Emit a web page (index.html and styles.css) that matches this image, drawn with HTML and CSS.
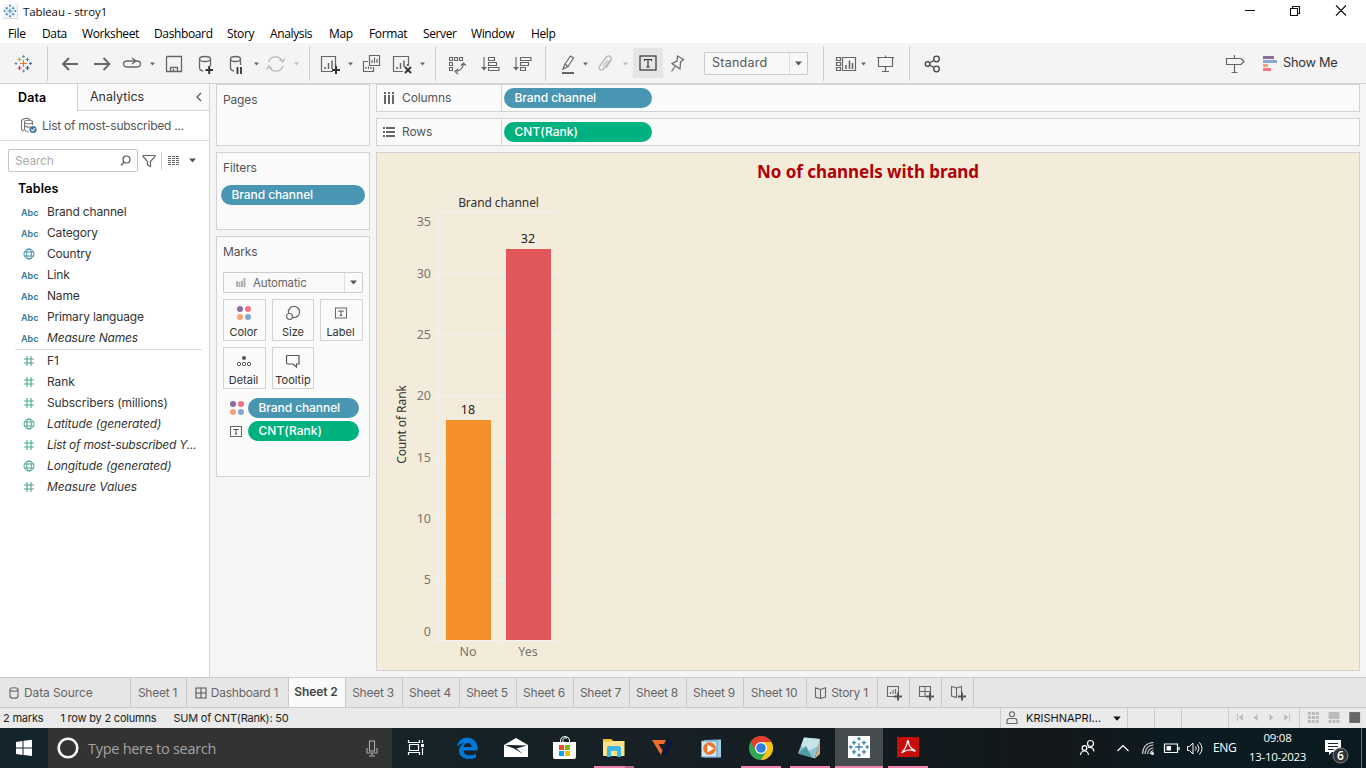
FILE: index.html
```html
<!DOCTYPE html>
<html lang="en">
<head>
<meta charset="utf-8">
<title>Tableau - stroy1</title>
<link rel="stylesheet" href="styles.css">
</head>
<body>
<svg class="defs" width="0" height="0">
  <defs>
    <symbol id="caret" viewBox="0 0 6 4"><path d="M0 0.3H6L3 3.8Z" fill="currentColor"/></symbol>
    <symbol id="dots" viewBox="0 0 16 16"><circle cx="4" cy="4" r="3" fill="#8a6d9a"/><circle cx="12" cy="4" r="3" fill="#fa7085"/><circle cx="4" cy="12" r="3" fill="#f2a576"/><circle cx="12" cy="12" r="3" fill="#85a7cf"/></symbol>
    <symbol id="tbox" viewBox="0 0 14 13"><rect x="1.500" y="1.500" width="11" height="10" fill="none" stroke="#666" stroke-width="1"/><path d="M4.500 5V4.500H9.500V5M7 4.500V9M5.800 9H8.200" fill="none" stroke="#555" stroke-width="1"/></symbol>
    <symbol id="hash" viewBox="0 0 12 12"><path d="M4 1V11M8 1V11M1 4H11M1 8H11" fill="none" stroke="currentColor" stroke-width="1.1"/></symbol>
    <symbol id="globe" viewBox="0 0 12 12"><circle cx="6" cy="6" r="5" fill="none" stroke="currentColor"/><ellipse cx="6" cy="6" rx="2.3" ry="5" fill="none" stroke="currentColor"/><path d="M1.5 4H10.5M1.5 8H10.5" stroke="currentColor"/></symbol>
    <symbol id="mark" viewBox="-10 -10 20 20"><path d="M-3.5 0H3.5M0-3.5V3.5M-6.5-4H-2.5M-4.5-6V-2M2.500-4H6.500M4.500-6V-2M-6.500 4.500H-2.500M-4.500 2.500V6.500M2.500 4.500H6.500M4.500 2.500V6.500M-1.500-7.500H1.500M0-9V-6M-1.500 7.500H1.500M0 6V9M-9 0H-6M-7.500-1.500V1.500M6 0H9M7.500-1.500V1.500" fill="none" stroke="currentColor" stroke-width="1.200"/></symbol>
  </defs>
</svg>
<div class="app">
  <header class="titlebar">
    <span class="appicon"><svg width="14" height="14"><use href="#mark"/></svg></span>
    <span class="apptitle">Tableau - stroy1</span>
    <svg class="winctl" width="130" height="22" viewBox="1236 0 130 22"><path d="M1245 10.500H1255M1290.500 8.500H1297.500V15.500H1290.500ZM1292.500 8V6.500H1299.500V13.500H1298M1336 5.500L1346 15.500M1346 5.500L1336 15.500" fill="none" stroke="#111" stroke-width="1.100"/></svg>
  </header>
  <nav class="menubar"><span>File</span><span>Data</span><span>Worksheet</span><span>Dashboard</span><span>Story</span><span>Analysis</span><span>Map</span><span>Format</span><span>Server</span><span>Window</span><span>Help</span></nav>

  <div class="toolbar">
    <svg width="47" height="41" viewBox="0 43 47 41"><g fill="none" stroke-width="1.200"><path d="M20 63.500H27M23.500 60V67" stroke="#e8762c"/><path d="M17.500 59.500H21.500M19.500 57.500V61.500" stroke="#e09a3e"/><path d="M25.500 59.500H29.500M27.500 57.500V61.500" stroke="#4f9a9c"/><path d="M17.500 68H21.500M19.500 66V70" stroke="#c13c4c"/><path d="M25.500 68H29.500M27.500 66V70" stroke="#2d5a82"/><path d="M22 56.500H25M23.500 55V58M22 71H25M23.500 69.500V72.500M14.500 63.500H17.500M16 62V65" stroke="#7397ac"/><path d="M29 63.500H32M30.500 62V65" stroke="#596aa0"/></g></svg>
    <i class="sep"></i>
    <svg width="261" height="41" viewBox="48 43 261 41" fill="none" stroke="#666" stroke-width="1.300">
      <path d="M78 64H63M69 58L63 64L69 70M94 64H109.500M103.500 58L109.500 64L103.500 70" stroke-width="1.900"/>
      <path d="M135 61H127.500Q123.500 61 123.500 64T127.500 67H136.500Q140.500 67 140.500 64T137 61H130M132 58L136 61L132 64"/>
      <path d="M166.500 56.500H181.500V71.500H166.500V56.500M170.500 71.500V67.500H177.500V71.500M173.500 71V69"/>
      <path d="M199.500 59V68.500Q200 70.500 203 71M210.500 59V66"/><ellipse cx="205" cy="59" rx="5.500" ry="2.500"/><path d="M205.500 70H213M209.200 66V74" stroke="#333" stroke-width="2"/>
      <path d="M230.500 59V68.500Q231 70.500 234 71M240.500 59V65"/><ellipse cx="235.500" cy="59" rx="5" ry="2.500"/><path d="M237.500 67V74M241 67V74" stroke="#333" stroke-width="1.800"/>
      <g stroke="#b8b8b8"><path d="M268.500 62A7.500 7.500 0 0 1 282 60.500M283 66A7.500 7.500 0 0 1 269.500 67.500M279.500 59.500L283 62L284.500 58.500M272 68.500L268.500 66L267 69.500"/></g>
      <g stroke="none"><path d="M150 62.500H155L152.500 65.500ZM254 62.500H259L256.500 65.500Z" fill="#666"/><path d="M294 62.500H299L296.500 65.500Z" fill="#bbb"/></g>
    </svg>
    <i class="sep"></i>
    <svg width="125" height="41" viewBox="310 43 125 41" fill="none" stroke="#666" stroke-width="1.200">
      <path d="M335.500 66V56.500H321.500V71.500H333"/><path d="M325 67V69M328.500 63V69M332 60.500V69M335.500 64V66" stroke-width="1.500"/><path d="M332 70H340M336 66V74" stroke="#333" stroke-width="2"/>
      <path d="M369.500 55.500H379.500V65.500H369.500ZM368 61.500H363.500V71.500H373.500V67"/><path d="M372 60V63M374.500 57.500V63M377 59V63M366 67V69M368.500 66.500V69M371 67V69"/>
      <path d="M408.500 66V56.500H393.500V71.500H403"/><path d="M397 67V69M400.500 63V69M404 60.500V67M407.500 64V66" stroke-width="1.500"/><path d="M405 67L411 73M411 67L405 73" stroke="#333" stroke-width="1.900"/>
      <path d="M348 62.500H353L350.500 65.500ZM420 62.500H425L422.500 65.500Z" fill="#666" stroke="none"/>
    </svg>
    <i class="sep"></i>
    <svg width="109" height="41" viewBox="436 43 109 41" fill="none" stroke="#666" stroke-width="1.100">
      <path d="M449.500 57.500H452.500V60.500H449.500ZM454.500 57.500H457.500V60.500H454.500ZM459.500 57.500H462.500V60.500H459.500ZM449.500 62.500H452.500V65.500H449.500ZM449.500 67.500H452.500V70.500H449.500ZM455 71.500Q463 71 463.500 63M461 65.500L463.500 63L466 65.500M458 69L455 71.500L458 74"/>
      <path d="M484 57V69M488.500 57.500H494.500V60.500H488.500ZM488.500 62.500H496.500V65.500H488.500ZM488.500 67.500H499V70.500H488.500Z"/><path d="M481 67H487L484 70.500Z" fill="#666" stroke="none"/>
      <path d="M516 57V69M520.500 57.500H531V60.500H520.500ZM520.500 62.500H528.500V65.500H520.500ZM520.500 67.500H525.500V70.500H520.500Z"/><path d="M513 67H519L516 70.500Z" fill="#666" stroke="none"/>
    </svg>
    <i class="sep"></i>
    <svg width="87" height="41" viewBox="546 43 87 41" fill="none" stroke="#666" stroke-width="1.100">
      <path d="M563 69L565 64L570.500 56L573.500 58L568 66.500ZM565 64L568 66.500"/><path d="M562 73H574" stroke-width="2"/>
      <path d="M610 60L604.500 68Q602 71 600 69.500T600.500 65L606 57.500Q608.500 54.500 610.500 57T610 62L606 68M607.500 60L603 66.500" stroke="#b8b8b8" stroke-width="1.300"/>
      <path d="M583 62.500H588L585.500 65.500Z" fill="#666" stroke="none"/><path d="M623 62.500H628L625.500 65.500Z" fill="#bbb" stroke="none"/>
    </svg>
    <span class="tbtn"><svg width="18" height="16" viewBox="0 0 18 16" fill="none" stroke="#333" stroke-width="1.200"><rect x="1" y="1" width="16" height="14"/><path d="M5.500 6V4.500H12.500V6M9 4.500V12M7.200 12H10.800"/></svg></span>
    <svg width="41" height="41" viewBox="663 43 41 41" fill="none" stroke="#666" stroke-width="1.200"><path d="M677.500 56L683.500 59.500L680.500 62L680 69L672 63.500L677 61ZM675.500 66L671.500 71.500"/></svg>
    <div class="fit"><span>Standard</span><b><svg width="7" height="5"><use href="#caret"/></svg></b></div>
    <svg width="15" height="41"></svg>
    <i class="sep"></i>
    <svg width="85" height="41" viewBox="824 43 85 41" fill="none" stroke="#666" stroke-width="1.200">
      <path d="M842.500 57.500H855.500V70.500H842.500ZM836.500 57.500H840.500V60.500H836.500ZM836.500 62.500H840.500V65.500H836.500ZM836.500 67.500H840.500V70.500H836.500Z"/><path d="M846 65V69M849.500 60.500V69M852.500 63V69" stroke-width="1.600"/>
      <path d="M861 62.500H866L863.500 65.500Z" fill="#666" stroke="none"/>
      <path d="M877 57.500H894M878.500 57.500V66.500H892.500V57.500M885.500 55.500V57M885.500 67V71.500M882 71.500H889"/>
    </svg>
    <i class="sep"></i>
    <svg width="40" height="41" viewBox="910 43 40 41" fill="none" stroke="#444" stroke-width="1.300"><circle cx="927.500" cy="64" r="2.300"/><circle cx="936.500" cy="59" r="2.800"/><circle cx="936.500" cy="69" r="2.800"/><path d="M929.500 63L934 60.500M929.500 65L934 67.500"/></svg>
    <svg class="push" width="66" height="41" viewBox="1216 43 66 41"><path d="M1226.500 58.500H1241L1244 61.500L1241 64.500H1226.500ZM1234.500 55V58M1234.500 65V72.500M1231.500 72.500H1237.500" fill="none" stroke="#666" stroke-width="1.200"/><path fill="#8a6d9a" d="M1263 56H1274V59H1263Z"/><path fill="#85a7cf" d="M1263 60H1277V63H1263Z"/><path fill="#f2a576" d="M1263 64H1268V67H1263Z"/><path fill="#fa7085" d="M1263 68H1271V71H1263Z"/></svg>
    <span class="showme">Show Me</span>
  </div>

  <main class="work">
    <aside class="data">
      <div class="dtabs"><b>Data</b><span>Analytics<svg width="6" height="10" viewBox="0 0 6 10"><path d="M5 1L1 5L5 9" fill="none" stroke="#555" stroke-width="1.200"/></svg></span></div>
      <div class="source"><svg width="18" height="18" viewBox="0 0 18 18" fill="none" stroke="#777" stroke-width="1.100"><path d="M10 3Q9 1 5.500 1.500T1.500 4V12Q2 14 4 14M4.500 5V12Q5 15 9 15M12.500 5V8"/><ellipse cx="8.500" cy="5" rx="4" ry="1.800"/><path d="M5 9Q8 11 10 9.500"/><circle cx="13" cy="12.500" r="3.600" fill="#3c7f9f" stroke="none"/><path d="M11.300 12.500L12.600 13.800L15 11.300" stroke="#fff"/></svg><span>List of most-subscribed ...</span></div>
      <div class="find"><div class="search"><span>Search</span><svg width="11" height="11" viewBox="0 0 11 11" fill="none" stroke="#555" stroke-width="1.200"><circle cx="6.500" cy="4.500" r="3.500"/><path d="M4 7L1 10.500"/></svg></div><svg width="14" height="14" viewBox="0 0 14 14" fill="none" stroke="#666" stroke-width="1.200"><path d="M1 1.500H13V2.500L8.500 7.500V12.500L5.500 11V7.500L1 2.500Z"/></svg><i></i><svg width="12" height="12" viewBox="0 0 12 12" stroke="#666" stroke-width="1.100" stroke-dasharray="3 1"><path d="M0 1.500H12M0 3.500H12M0 5.500H12M0 7.500H12M0 9.500H12"/></svg><svg class="drop" width="7" height="5"><use href="#caret"/></svg></div>
      <h2>Tables</h2>
      <ul class="fields dim">
        <li><b>Abc</b>Brand channel</li><li><b>Abc</b>Category</li><li><svg width="12" height="12"><use href="#globe"/></svg>Country</li><li><b>Abc</b>Link</li><li><b>Abc</b>Name</li><li><b>Abc</b>Primary language</li><li><b>Abc</b><em>Measure Names</em></li>
      </ul>
      <ul class="fields mea">
        <li><svg width="12" height="12"><use href="#hash"/></svg>F1</li><li><svg width="12" height="12"><use href="#hash"/></svg>Rank</li><li><svg width="12" height="12"><use href="#hash"/></svg>Subscribers (millions)</li><li><svg width="12" height="12"><use href="#globe"/></svg><em>Latitude (generated)</em></li><li><svg width="12" height="12"><use href="#hash"/></svg><em class="long">List of most-subscribed Y...</em></li><li><svg width="12" height="12"><use href="#globe"/></svg><em>Longitude (generated)</em></li><li><svg width="12" height="12"><use href="#hash"/></svg><em>Measure Values</em></li>
      </ul>
    </aside>

    <section class="cards">
      <div class="card pages"><h3>Pages</h3></div>
      <div class="card filters"><h3>Filters</h3><div class="pill blue">Brand channel</div></div>
      <div class="card marks"><h3>Marks</h3>
        <div class="marktype"><svg width="10" height="10" viewBox="0 0 10 10" stroke="#aaa" stroke-width="1.800"><path d="M1 3V9M3.500 4V9M6 3V9M8.500 0V9"/></svg><span>Automatic</span><b><svg width="7" height="5"><use href="#caret"/></svg></b></div>
        <div class="mgrid">
          <div><svg width="16" height="16"><use href="#dots"/></svg>Color</div>
          <div><svg width="16" height="16" viewBox="0 0 16 16" fill="#fafafa" stroke="#666" stroke-width="1.200"><circle cx="9" cy="7" r="5.600"/><circle cx="4.500" cy="11.500" r="3"/></svg>Size</div>
          <div><svg width="14" height="16"><use href="#tbox"/></svg>Label</div>
          <div><svg width="16" height="16" viewBox="0 0 16 16" fill="none" stroke="#555"><circle cx="8" cy="5" r="2" fill="#555" stroke="none"/><circle cx="3" cy="11" r="1.700"/><circle cx="8" cy="11" r="1.700"/><circle cx="13" cy="11" r="1.700"/></svg>Detail</div>
          <div><svg width="16" height="16" viewBox="0 0 16 16" fill="none" stroke="#555" stroke-width="1.200"><path d="M2 2.500H14V11H11.500V14L8 11H3Q1.500 11 1.500 9.500V3.500Z"/></svg>Tooltip</div>
        </div>
        <div class="enc"><svg width="16" height="16"><use href="#dots"/></svg><div class="pill blue">Brand channel</div></div>
        <div class="enc"><svg width="16" height="13"><use href="#tbox"/></svg><div class="pill green">CNT(Rank)</div></div>
      </div>
    </section>

    <section class="canvas">
      <div class="shelf"><label><svg width="12" height="12" viewBox="0 0 12 12" fill="#666"><path d="M1 0H3V2H1ZM5 0H7V2H5ZM9 0H11V2H9ZM1 3H3V12H1ZM5 3H7V12H5ZM9 3H11V12H9Z"/></svg>Columns</label><div class="pill blue">Brand channel</div></div>
      <div class="shelf"><label><svg width="12" height="12" viewBox="0 0 12 12" fill="#666"><path d="M0 1H2V3H0ZM0 5H2V7H0ZM0 9H2V11H0ZM3 1H12V3H3ZM3 5H12V7H3ZM3 9H12V11H3Z"/></svg>Rows</label><div class="pill green">CNT(Rank)</div></div>
      <div class="view">
        <h1>No of channels with brand</h1>
        <svg class="chart" width="200" height="480" viewBox="380 185 200 480">
          <path d="M433 212.500H559M433 273.500H559M433 334.500H559M433 395.500H559M433 457.500H559M433 518.500H559M433 579.500H559M433 640.500H559M438.500 212V644M498.500 641V644M558.500 641V644" stroke="#f2f2f3" fill="none"/>
          <rect x="446" y="420" width="45" height="220" fill="#f58f2b"/><rect x="506" y="249" width="45" height="391" fill="#e15759"/>
          <g class="tick" text-anchor="end"><text x="431" y="226">35</text><text x="431" y="278">30</text><text x="431" y="339">25</text><text x="431" y="400">20</text><text x="431" y="462">15</text><text x="431" y="523">10</text><text x="431" y="584">5</text><text x="431" y="636">0</text></g>
          <g class="tick" text-anchor="middle"><text x="468" y="656">No</text><text x="528" y="656">Yes</text></g>
          <g class="val" text-anchor="middle"><text x="468" y="414">18</text><text x="528" y="243">32</text></g>
          <g class="axis" text-anchor="middle"><text x="498.500" y="207">Brand channel</text><text transform="translate(406 424.500) rotate(-90)">Count of Rank</text></g>
        </svg>
      </div>
    </section>
  </main>

  <div class="sheets">
    <span class="source-tab"><svg width="10" height="12" viewBox="0 0 10 12" fill="none" stroke="#666" stroke-width="1.100"><ellipse cx="5" cy="2.500" rx="4" ry="1.700"/><path d="M1 2.500V9.500Q1.500 11.300 5 11.300T9 9.500V2.500"/></svg>Data Source</span><span class="narrow">Sheet 1</span><span class="dash"><svg width="12" height="12" viewBox="0 0 12 12" fill="none" stroke="#555" stroke-width="1.100"><path d="M1 1H11V11H1ZM6 1V11M1 6H11"/></svg>Dashboard 1</span><span class="on">Sheet 2</span><span>Sheet 3</span><span>Sheet 4</span><span>Sheet 5</span><span>Sheet 6</span><span class="narrow">Sheet 7</span><span>Sheet 8</span><span>Sheet 9</span><span class="ten">Sheet 10</span><span class="story"><svg width="13" height="12" viewBox="0 0 13 12" fill="none" stroke="#666" stroke-width="1.100"><path d="M6.500 2.500L1.500 0.800V10L6.500 11.500L11.500 10V0.800ZM6.500 2.500V11"/></svg>Story 1</span>
    <span class="new"><svg width="16" height="16" viewBox="0 0 16 16" fill="none" stroke="#666" stroke-width="1.100"><path d="M12.500 8V1.500H1.500V11.500H9M4.500 7V9M7 5V9M9.500 4V9"/><path d="M8 11.500H16M12 7.500V15.500" stroke="#555" stroke-width="2"/></svg></span>
    <span class="new"><svg width="16" height="16" viewBox="0 0 16 16" fill="none" stroke="#666" stroke-width="1.100"><path d="M12.500 8V1.500H1.500V11.500H9M7 1.500V11.500M1.500 6.500H12.500"/><path d="M8 11.500H16M12 7.500V15.500" stroke="#555" stroke-width="2"/></svg></span>
    <span class="new"><svg width="16" height="16" viewBox="0 0 16 16" fill="none" stroke="#666" stroke-width="1.100"><path d="M11.500 8V1.500L6.500 3L1.500 1.500V11L6.500 12.500V3"/><path d="M8 11.500H16M12 7.500V15.500" stroke="#555" stroke-width="2"/></svg></span>
  </div>
  <div class="status"><span>2 marks</span><span>1 row by 2 columns</span><span>SUM of CNT(Rank): 50</span>
    <div class="user"><svg width="12" height="14" viewBox="0 0 12 14" fill="none" stroke="#666" stroke-width="1.100"><circle cx="6" cy="3.300" r="2.500"/><path d="M1 12.500V10Q1 7.500 3.500 7.500H8.500Q11 7.500 11 10V12.500Z"/></svg><span>KRISHNAPRI...</span><svg width="8" height="5"><use href="#caret"/></svg></div>
    <i></i><i></i><i class="wide"></i>
    <svg class="pager" width="71" height="20" viewBox="1228 708 71 20" fill="#bbb"><path d="M1236 714H1237V721H1236ZM1242 714V721L1238 717.500ZM1257 714V721L1253 717.500ZM1269 714V721L1273 717.500ZM1284 714V721L1288 717.500ZM1289 714H1290V721H1289Z"/></svg>
    <svg class="layouts" width="67" height="20" viewBox="1299 708 67 20" fill="#bbb"><path d="M1307 712H1310V715H1307ZM1311 712H1314V715H1311ZM1315 712H1318V715H1315ZM1307 716H1310V719H1307ZM1311 716H1314V719H1311ZM1315 716H1318V719H1315ZM1307 720H1310V723H1307ZM1311 720H1314V723H1311ZM1315 720H1318V723H1315ZM1328 712H1339V719H1328ZM1328 720H1331V723H1328ZM1332 720H1335V723H1332ZM1336 720H1339V723H1336Z"/><path d="M1349 712H1360V723H1349Z" fill="#666"/></svg>
  </div>

  <footer class="taskbar">
    <svg width="48" height="40" viewBox="0 728 48 40" fill="#fff"><path d="M16 742L22.500 741V747.500H16ZM23.500 740.800L32 739.800V747.500H23.500ZM16 748.500H22.500V755L16 754ZM23.500 748.500H32V756L23.500 755Z"/></svg>
    <div class="tsearch"><svg width="22" height="22" viewBox="0 0 22 22" fill="none" stroke="#f4f4f4" stroke-width="2.600"><circle cx="11" cy="11" r="9.300"/></svg><span>Type here to search</span><svg width="12" height="17" viewBox="0 0 12 17" fill="none" stroke="#aaa" stroke-width="1.100"><rect x="3.500" y="1" width="5" height="10"/><path d="M1 8V13H11V8M6 13V16M3 16H9"/></svg></div>
    <svg width="50" height="40" viewBox="392 728 50 40" fill="none" stroke="#fff" stroke-width="1.200"><path d="M408.500 740V742.500H419.500V740M408.500 755V752.500H419.500V755M409.500 744.500H418.500V750.500H409.500ZM422.500 740V743M422.500 748V755"/><path d="M421 744H424V747H421Z" fill="#fff" stroke="none"/></svg>
    <svg width="49" height="40" viewBox="442 728 49 40"><path d="M457 746.500Q458.500 738 467 737.500Q476.500 738 477.500 747V750.500H463.500Q464 755 469 755.500Q473 755.500 476 753.800V757.500Q473 759 468 759Q458.500 758 459 750Q459.500 745.500 464 743Q459.500 743.500 457 746.500ZM463.500 747H471.500Q471.500 743 468 743Q464.500 743 463.500 747Z" fill="#0078d7"/></svg>
    <svg width="49" height="40" viewBox="491 728 49 40"><path d="M504 745L516 738L528 745V757H504Z" fill="#fff"/><path d="M505 745L527 745.500L516.500 748.500L523 754L514 748.500Z" fill="#172126"/></svg>
    <svg width="49" height="40" viewBox="540 728 49 40"><path d="M553 742H576V757Q576 759 574 759H555Q553 759 553 757Z" fill="#fff"/><path d="M560.500 742V740Q561 736.500 565 736.500T569.500 740V742M563 742V739.500Q564 737 567 738" fill="none" stroke="#fff"/><path d="M559 745H564V750H559Z" fill="#f25022"/><path d="M565 745H570V750H565Z" fill="#7fba00"/><path d="M559 751H564V756H559Z" fill="#00a4ef"/><path d="M565 751H570V756H565Z" fill="#ffb900"/></svg>
    <svg width="49" height="40" viewBox="589 728 49 40"><path d="M603 739H611L613 741H624.500V756H603Z" fill="#ffe38b"/><path d="M603 739H611V741.500H603Z" fill="#f5be20"/><path d="M607 757V748Q607 746 609 746H619Q621 746 621 748V757H617V751H611V757Z" fill="#3fb7e5"/><path d="M594 766H625V768H594Z" fill="#f283ad"/><path d="M625 766H634V768H625Z" fill="#b8648b"/></svg>
    <svg width="49" height="40" viewBox="638 728 49 40"><path d="M652 740H666L664 744H658.500L662.500 750.500L661 755Z" fill="#f26b2a"/><path d="M668 740H673L666.500 754.500H661.500Z" fill="#0b1740"/></svg>
    <svg width="49" height="40" viewBox="687 728 49 40"><path d="M704 740L721 739.500V757.500H704Z" fill="#9ecde5"/><path d="M701.500 741H717V757H701.500Z" fill="#cfe9f7" stroke="#5e99b8"/><circle cx="709.500" cy="748.500" r="6.300" fill="#ed762c"/><path d="M707.500 744.500L714 748.500L707.500 752.500Z" fill="#fff"/></svg>
    <svg width="49" height="40" viewBox="736 728 49 40"><circle cx="761" cy="748" r="12" fill="#31a852"/><path d="M750.600 742A12 12 0 0 1 771.400 742H761L756 751Z" fill="#e33b2e"/><path d="M771.400 742A12 12 0 0 1 761 760L766.500 751L761 742Z" fill="#fbc116"/><circle cx="761" cy="748" r="6" fill="#fff"/><circle cx="761" cy="748" r="4.800" fill="#2f7de1"/><path d="M741 766H781V768H741Z" fill="#f283ad"/></svg>
    <svg width="50" height="40" viewBox="785 728 50 40"><path d="M804 737.500L820 739L815 758.500L798 753.500Z" fill="#8fc5cf"/><path d="M804 737.500L820 739L818 746L809 751L801 746Z" fill="#c4e6ea"/><path d="M798 753.500L806 746L812 757.500Z" fill="#4f9aa6"/><path d="M820 739V754L815 758.500Z" fill="#c9b184"/><path d="M790 766H830V768H790Z" fill="#f283ad"/></svg>
    <span class="active"><b><svg width="22" height="22"><use href="#mark"/></svg></b></span>
    <svg width="49" height="40" viewBox="883 728 49 40"><rect x="897" y="737" width="22" height="20" fill="#c90c0c"/><path d="M901.500 753Q907 747 907.500 741Q908.500 740 908.500 742Q909 748 915 750.500Q915 752 912 750Q907 749.500 902 752.500" fill="none" stroke="#fff" stroke-width="1.300"/><path d="M888 766H928V768H888Z" fill="#f283ad"/></svg>
    <svg class="push" width="137" height="40" viewBox="1073 728 137 40" fill="none" stroke="#fff" stroke-width="1.200"><circle cx="1090.500" cy="743.500" r="3"/><circle cx="1084.500" cy="748" r="2.400"/><path d="M1080.500 755Q1081 751 1084.500 751T1088.500 755M1088 747.500Q1093.500 746.500 1094 751.500M1117.500 751L1123 745.500L1128.500 751M1164.500 744H1177.500V752.500H1164.500ZM1179 747V750"/><path d="M1166.500 746H1171V750.500H1166.500Z" fill="#fff" stroke="none"/><path d="M1187.500 746.500H1189.500L1193 743V754L1189.500 750.500H1187.500ZM1195.500 746.500Q1197 748.500 1195.500 750.500M1197.500 744.500Q1200.500 748.500 1197.500 752.500M1199.500 742.500Q1204.500 748.500 1199.500 754.500" stroke-width="1"/><g stroke="#ccc"><path d="M1142.500 754Q1143 743 1153.500 742.500M1145 754Q1145.500 745.500 1153.500 745M1147.500 754Q1148 748.500 1153.500 748M1150 754Q1150.500 751 1153.500 750.500"/></g><circle cx="1152.500" cy="753.500" r="1.500" fill="#fff" stroke="none"/></svg>
    <span class="lang">ENG</span>
    <div class="clock"><span>09:08</span><span>13-10-2023</span></div>
    <svg width="56" height="40" viewBox="1310 728 56 40"><path d="M1325 740H1341V752H1332L1329 755V752H1325Z" fill="#fff"/><path d="M1328 743.500H1338M1328 746.500H1338M1328 749.500H1334" stroke="#13242c"/><circle cx="1340.500" cy="755.500" r="7.500" fill="#333" stroke="#888"/><text class="badge" x="1340.500" y="760" text-anchor="middle">6</text><path d="M1361.500 728V768" stroke="#64717a"/></svg>
  </footer>
</div>
</body>
</html>
```
FILE: styles.css
```css
* { box-sizing: border-box; margin: 0; padding: 0; }
body { width: 1366px; height: 768px; overflow: hidden; background: #f5f5f5; font: 12px/16px Inter, "Open Sans", sans-serif; color: #333; }
.defs { position: absolute; }
svg { display: block; flex: none; }
span, label, li, h1 { white-space: nowrap; }
.app { display: flex; flex-direction: column; height: 768px; }

/* window chrome */
.titlebar { height: 22px; flex: none; background: #fff; display: flex; align-items: center; font: 11.5px/16px "Open Sans", sans-serif; letter-spacing: -0.1px; color: #111; padding: 1px 0 0 3px; }
.appicon { width: 15px; height: 15px; border: 1px solid #ddd; border-width: 0 1px 1px 0; color: #3180ab; margin-right: 5px; background: #f4f7f9; }
.winctl { margin: -1px 0 0 auto; }
.menubar { height: 21px; flex: none; background: #fff; display: grid; grid-template-columns: 34px 40px 72px 73px 43px 59px 40px 54px 48px 60px 50px; padding-left: 8px; align-items: center; font: 12px/16px "Open Sans", sans-serif; letter-spacing: -0.37px; color: #000; padding-top: 2px; }
.toolbar { height: 41px; flex: none; display: flex; align-items: center; background: #f4f4f4; border-bottom: 1px solid #d2d2d2; }
.toolbar > svg { margin-bottom: -1px; }
.sep { width: 1px; height: 35px; background: #d0d0d0; flex: none; }
.tbtn { width: 30px; height: 30px; background: #e5e5e5; display: grid; place-items: center; }
.fit { width: 104px; height: 23px; border: 1px solid #ccc; border-radius: 1px; display: flex; align-items: center; justify-content: space-between; padding-left: 7px; background: #f8f8f8; font-size: 12.5px; letter-spacing: 0.25px; color: #555; }
.fit b, .marktype b { width: 18px; height: 100%; border-left: 1px solid #ddd; display: grid; place-items: center; color: #555; }
.push { margin-left: auto; }
.showme { width: 84px; padding-left: 1px; font-size: 12.8px; letter-spacing: -0.25px; color: #333; }

/* data pane */
.work { flex: 1; min-height: 0; display: flex; }
.data { width: 210px; background: #fff; border-right: 1px solid #d2d2d2; display: flex; flex-direction: column; }
.dtabs { display: flex; height: 27px; flex: none; }
.dtabs b { width: 77px; padding-left: 18px; line-height: 27px; font-size: 12.5px; letter-spacing: 0.1px; color: #000; font-weight: 600; }
.dtabs span { flex: 1; display: flex; justify-content: space-between; align-items: center; background: #fafafa; border: 1px solid #d2d2d2; border-width: 0 0 1px 1px; padding: 0 7px 0 12px; font-size: 12.5px; }
.source { height: 30px; flex: none; border-bottom: 1px solid #dcdcdc; display: flex; align-items: center; gap: 4px; padding-left: 20px; color: #555; letter-spacing: -0.25px; }
.find { height: 39px; flex: none; display: flex; align-items: center; padding-left: 8px; }
.search { width: 130px; height: 23px; border: 1px solid #c4c4c4; border-radius: 2px; display: flex; align-items: center; justify-content: space-between; padding: 0 6px; color: #aaa; margin-right: 4px; letter-spacing: -0.2px; }
.find i { width: 1px; height: 18px; background: #ccc; margin: 0 6px 0 5px; }
.drop { margin-left: 9px; color: #555; }
.data h2 { font-size: 12.5px; line-height: 18px; font-weight: 600; color: #000; padding-left: 18px; margin-bottom: 3px; letter-spacing: 0.12px; }
.fields { list-style: none; letter-spacing: -0.18px; }
.fields li { height: 21px; display: flex; align-items: center; color: #333; padding-left: 21px; }
.fields li b { width: 26px; font: 600 9px/12px Inter, sans-serif; color: #337c99; letter-spacing: 0; padding-top: 2px; }
.fields li svg { margin: 0 12px 0 2px; }
.dim { color: #3e89a6; height: 148px; }
.dim svg { color: #4791ad; }
.mea { margin: 0 7px 0 15px; border-top: 1px solid #dcdcdc; letter-spacing: -0.1px; }
.mea li { padding-left: 6px; }
.mea svg { color: #4baa88; }
.long { letter-spacing: -0.25px; }

/* cards */
.cards { width: 154px; margin-left: 6px; display: flex; flex-direction: column; gap: 6px; }
.card { border: 1px solid #d2d2d2; background: #fafafa; }
.card h3 { font: 12px/16px Inter, sans-serif; letter-spacing: -0.15px; color: #555; padding: 7px 0 0 6px; }
.pages { height: 62px; }
.filters { height: 78px; padding: 0 4px; }
.card.filters h3 { padding-left: 2px; margin-bottom: 9px; }
.marks { height: 241px; padding: 0 6px; }
.card.marks h3 { padding-left: 0; margin-bottom: 12px; }
.pill { height: 20px; border-radius: 10px; line-height: 20px; padding-left: 10.5px; color: #fff; font-weight: 500; letter-spacing: -0.08px; }
.green { letter-spacing: 0.05px; }
.blue { background: #4996b2; }
.green { background: #00b180; }
.marktype { height: 21px; border: 1px solid #ccc; border-radius: 1px; display: flex; align-items: center; padding-left: 12px; color: #666; font-size: 11.5px; letter-spacing: -0.15px; }
.marktype span { margin-left: 7px; }
.marktype b { margin-left: auto; }
.mgrid { display: grid; grid-template-columns: 43px 42px 43px; gap: 6px; margin-top: 6px; }
.mgrid div { height: 42px; border: 1px solid #d2d2d2; display: flex; flex-direction: column; align-items: center; font-size: 11px; line-height: 14px; padding: 5px 2px 0 0; gap: 4px; color: #333; }
.mgrid div:nth-child(2), .mgrid div:nth-child(5) { padding-right: 0; }
.mgrid + .enc { margin-top: 9px; }
.enc { display: flex; align-items: center; margin-bottom: 3px; padding-left: 6px; }
.enc svg { width: 16px; margin: 0 3px 0 0; }
.enc:last-child svg { width: 14px; margin-right: 5px; }
.enc .pill { width: 111px; }

/* shelves and view */
.canvas { width: 984px; margin-left: 6px; display: flex; flex-direction: column; gap: 6px; }
.shelf { height: 28px; border: 1px solid #d2d2d2; background: #fafafa; display: flex; align-items: center; }
.shelf label { width: 125px; height: 100%; border-right: 1px solid #d2d2d2; display: flex; align-items: center; gap: 7px; padding-left: 6px; color: #555; letter-spacing: -0.1px; }
.shelf .pill { width: 148px; margin-left: 2px; }
.view { height: 519px; border: 1px solid #d2d2d2; background: #f4ecdb; }
.view h1 { height: 32px; text-align: center; font: 700 17px/38px "Noto Sans", sans-serif; letter-spacing: -0.05px; color: #b10003; }
.chart { margin-left: 3px; }
.chart text { font-family: "Noto Sans", sans-serif; font-size: 12px; }
.tick { fill: #787570; }
.chart .tick text { font-size: 12.5px; }
.val { fill: #222; }
.chart .val text { font-size: 12.5px; }
.axis { fill: #333; letter-spacing: -0.08px; }

/* worksheet tabs */
.sheets { height: 31px; flex: none; display: flex; background: #e6e6e6; border: 1px solid #cbcbcb; border-width: 1px 0; }
.sheets span { width: 57px; flex: none; border-right: 1px solid #c8c8c8; display: flex; align-items: center; justify-content: center; font-size: 12px; color: #666; letter-spacing: -0.25px; padding-right: 2px; }
.sheets .narrow { width: 56px; }
.sheets .source-tab { width: 131px; justify-content: flex-start; padding-left: 9px; gap: 5px; letter-spacing: -0.1px; }
.sheets .dash { width: 102px; gap: 4px; }
.sheets .on { background: #fafafa; font-weight: 600; color: #444; padding-bottom: 2px; letter-spacing: -0.1px; }
.sheets .ten { width: 63px; }
.sheets .story { width: 71px; gap: 4px; }
.sheets .new { width: 32px; padding-right: 0; }
.status { height: 20px; flex: none; display: flex; align-items: center; background: #eaeaea; padding-left: 3px; font-size: 11px; letter-spacing: -0.2px; color: #222; }
.status > span { margin-right: 17px; }
.user { margin-left: auto; width: 127px; height: 20px; border-left: 1px solid #ccc; display: flex; align-items: center; padding-left: 5px; color: #111; }
.user span { margin: 0 12px 0 8px; letter-spacing: 0; }
.status i { width: 27px; height: 20px; border-left: 1px solid #ccc; }
.status .wide { width: 47px; }
.pager, .layouts { border-left: 1px solid #ccc; }

/* taskbar */
.taskbar { height: 40px; flex: none; display: flex; background: linear-gradient(90deg, #14252d 0, #172126 45%, #11191d 72%, #151719 76%, #0b1b22 86%, #0a1a21 100%); color: #fff; font-family: "Open Sans", sans-serif; }
.tsearch { width: 344px; background: #333; display: flex; align-items: center; padding: 0 14px 0 9px; }
.tsearch span { font-size: 14.5px; line-height: 20px; margin-left: 9px; margin-right: auto; padding-top: 1px; color: #a3a3a3; letter-spacing: -0.28px; }
.active { width: 48px; background: #474c4f; border-bottom: 2px solid #f283ad; display: grid; place-items: center; }
.active b { width: 22px; height: 22px; background: #fff; color: #3f82ac; }
.lang { width: 37px; padding-left: 3px; line-height: 40px; font-size: 12px; letter-spacing: -0.4px; }
.clock { width: 63px; display: flex; flex-direction: column; align-items: center; font-size: 11.5px; line-height: 19px; letter-spacing: -0.28px; padding-right: 2px; }
.badge { font: 600 12px "Open Sans", sans-serif; fill: #fff; }
```
